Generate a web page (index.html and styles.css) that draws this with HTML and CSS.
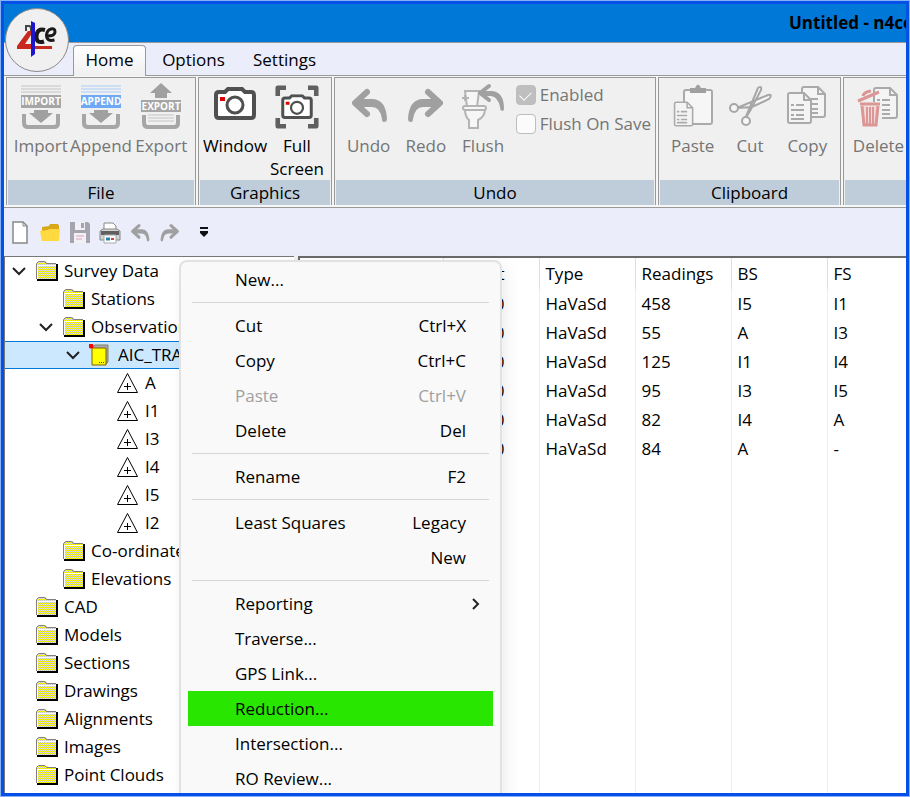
FILE: index.html
```html
<!DOCTYPE html>
<html lang="en">
<head>
<meta charset="utf-8">
<title>Untitled - n4ce</title>
<link rel="stylesheet" href="styles.css">
</head>
<body>
<svg class="defs" aria-hidden="true">
  <defs>
    <pattern id="dither" width="2" height="2" patternUnits="userSpaceOnUse">
      <rect width="2" height="2" fill="#c6c6c6"/><rect width="1" height="1" fill="#ff0"/><rect x="1" y="1" width="1" height="1" fill="#ff0"/>
    </pattern>
    <pattern id="dither-alt" width="2" height="2" patternUnits="userSpaceOnUse">
      <rect width="2" height="2" fill="#ff0"/><rect width="1" height="1" fill="#c6c6c6"/><rect x="1" y="1" width="1" height="1" fill="#c6c6c6"/>
    </pattern>
    <symbol id="folder-frame" viewBox="0 0 24 22">
      <path d="M1.500 19V3.500L3.500 1.500h6l2 2h9.500" fill="none" stroke="#808080"/>
      <path d="M2.500 19V5.500h19" fill="none" stroke="#fff"/>
      <path d="M2 20h20V4" fill="none" stroke="#000" stroke-width="2" shape-rendering="crispEdges"/>
    </symbol>
    <symbol id="folder" viewBox="0 0 24 22">
      <path d="M2 19V4L4 1h7l2 3h8v15z" fill="url(#dither)" shape-rendering="crispEdges"/>
      <use href="#folder-frame" width="24" height="22"/>
    </symbol>
    <symbol id="folder-alt" viewBox="0 0 24 22">
      <path d="M2 19V4L4 1h7l2 3h8v15z" fill="url(#dither-alt)" shape-rendering="crispEdges"/>
      <use href="#folder-frame" width="24" height="22"/>
    </symbol>
    <symbol id="station" viewBox="0 0 24 22">
      <path d="M11.500 1.500L1.500 20.500h20zM8 14.500h7M11.500 11v7" fill="none" stroke="#000"/>
    </symbol>
    <symbol id="chevron" viewBox="0 0 14 14"><path d="M1 4l6 6 6-6" fill="none" stroke="#222" stroke-width="2"/></symbol>
    <symbol id="undo" viewBox="0 0 38 38">
      <path d="M17 5L5 16l12 11" fill="none" stroke="#a0a0a0" stroke-width="6" stroke-linejoin="round" stroke-linecap="round"/>
      <path d="M7 12h16q13 1 14 20 0 3-3 3-2 0-2-3-2-12-10-12H7z" fill="#a0a0a0"/>
    </symbol>
    <symbol id="sheet" viewBox="0 0 28 34">
      <path d="M2 4q0-2 2-2h14l7 7v21q0 2-2 2H4q-2 0-2-2z" fill="#f4f4f4" stroke="#aaa" stroke-width="2"/>
      <path d="M18 2v7h7" fill="none" stroke="#aaa" stroke-width="2"/>
      <path d="M5 14h3m2 0h8M5 19h13M5 24h3m2 0h8M5 28h13" stroke="#aaa" stroke-width="2"/>
    </symbol>
    <symbol id="camera" viewBox="0 0 44 34">
      <path d="M3 8q0-3 3-3h6l3-3h14l3 3h6q3 0 3 3v20q0 3-3 3H6q-3 0-3-3z" fill="#fff" stroke="#505050" stroke-width="4"/>
      <circle cx="22" cy="18" r="8" fill="#fff" stroke="#505050" stroke-width="3"/><rect x="7" y="10" width="5" height="4" fill="#d00"/>
    </symbol>
  </defs>
</svg>
<div class="window">
  <header class="titlebar"><h1>Untitled - n4ce</h1></header>
  <button class="app-button" aria-label="Application menu">
    <svg viewBox="0 0 62 62" width="62" height="62">
      <path d="M25 22h-3L11 37v3h35v-3H29l-4-1z" fill="#c8281e"/><path d="M19 35l6-9v9z" fill="#f0f0f0"/>
      <path d="M20 22v-5h3q2 0 2 3v2" fill="none" stroke="#444" stroke-width="2"/>
      <path d="M39 21q-8-2-8.500 6t7.500 5.500" fill="none" stroke="#1a1a1a" stroke-width="4"/>
      <path d="M41 27q8 0 8-4 0-4-4-3-4 1-4.500 6 0 7 8 5" fill="none" stroke="#1a1a1a" stroke-width="3"/>
      <path d="M25 12l4 2v31l-4 3z" fill="#1c16d0"/>
    </svg>
  </button>
  <nav class="tabs">
    <button class="tab active">Home</button><button class="tab">Options</button><button class="tab">Settings</button>
  </nav>
  <section class="ribbon">
    <div class="group g-file">
      <div class="tools">
        <button class="tool" disabled><svg viewBox="0 0 44 48"><path d="M2 3h40M2 6h40M2 9h40" stroke="#c4c4c4"/><path d="M2 12h40v13H2z" fill="#a6a6a6"/><text x="22" y="22" class="badge-text">IMPORT</text><path d="M15 27h14v3h5L22 40 10 30h5z" fill="#a0a0a0"/><path d="M5 31v9q0 4 4 4h26q4 0 4-4v-9" fill="none" stroke="#a6a6a6" stroke-width="4"/></svg>Import</button>
        <button class="tool" disabled><svg viewBox="0 0 44 48"><path d="M2 3h40M2 6h40M2 9h40" stroke="#a9cdf8"/><path d="M2 12h40v13H2z" fill="#6fa8f5"/><text x="22" y="22" class="badge-text">APPEND</text><path d="M15 27h14v3h5L22 40 10 30h5z" fill="#a0a0a0"/><path d="M5 31v9q0 4 4 4h26q4 0 4-4v-9" fill="none" stroke="#a6a6a6" stroke-width="4"/></svg>Append</button>
        <button class="tool" disabled><svg viewBox="0 0 44 48"><path d="M22 0l11 10h-5v5H16v-5h-5z" fill="#a0a0a0"/><path d="M2 17h40v12H2z" fill="#a6a6a6"/><text x="22" y="27" class="badge-text">EXPORT</text><path d="M9 32h26M9 35h26M9 38h26" stroke="#c4c4c4"/><path d="M5 32v8q0 4 4 4h26q4 0 4-4v-8" fill="none" stroke="#a6a6a6" stroke-width="4"/></svg>Export</button>
      </div>
      <h2>File</h2>
    </div>
    <div class="group g-graphics">
      <div class="tools">
        <button class="tool"><svg viewBox="0 0 44 48"><use href="#camera" x="0" y="4" width="44" height="34"/></svg>Window</button>
        <button class="tool"><svg viewBox="0 0 48 48"><path d="M3 12V3h9M36 3h9v9M3 36v9h9M36 45h9v-9" fill="none" stroke="#606060" stroke-width="5" stroke-linejoin="round"/><use href="#camera" x="6" y="10" width="36" height="28"/></svg>Full<br>Screen</button>
      </div>
      <h2>Graphics</h2>
    </div>
    <div class="group g-undo">
      <div class="tools">
        <button class="tool" disabled><svg viewBox="0 0 44 48"><use href="#undo" x="3" y="4" width="38" height="38"/></svg>Undo</button>
        <button class="tool" disabled><svg viewBox="0 0 44 48"><use href="#undo" x="3" y="4" width="38" height="38" transform="matrix(-1 0 0 1 44 0)"/></svg>Redo</button>
        <button class="tool" disabled><svg viewBox="0 0 44 48"><g fill="#f6f6f6" stroke="#b4b4b4" stroke-width="2"><path d="M4 8h14l-2 16H6zM4 26h20q0 8-7 11v8H8v-8q-4-3-4-11z"/><rect x="2" y="23" width="23" height="4" rx="2"/><path d="M1 15h7M4 12v6"/></g><path d="M28 3l-9 7 9 7" fill="none" stroke="#a0a0a0" stroke-width="4" stroke-linejoin="round" stroke-linecap="round"/><path d="M20 8h11q12 1 12 18 0 2-2 2-2-1-2-4-2-10-9-11H20z" fill="#a0a0a0"/></svg>Flush</button>
        <div class="checks">
          <label><input type="checkbox" checked disabled>Enabled</label>
          <label><input type="checkbox" disabled>Flush On Save</label>
        </div>
      </div>
      <h2>Undo</h2>
    </div>
    <div class="group g-clip">
      <div class="tools">
        <button class="tool" disabled><svg viewBox="0 0 44 48"><rect x="13" y="7" width="28" height="34" rx="2" fill="#f6f6f6" stroke="#aaa" stroke-width="2"/><path d="M19 10V5h5q3-7 6 0h5v5z" fill="#a0a0a0"/><use href="#sheet" x="2" y="17" width="22" height="28"/></svg>Paste</button>
        <button class="tool" disabled><svg viewBox="0 0 44 48"><g fill="#f6f6f6" stroke="#a6a6a6" stroke-width="2"><path d="M17 36L30 5q4-3 3 2L22 28zM9 25l31-13q5-1 1 4L24 24z"/><circle cx="6" cy="25" r="4"/><circle cx="18" cy="38" r="4"/></g></svg>Cut</button>
        <button class="tool" disabled><svg viewBox="0 0 44 48"><use href="#sheet" x="15" y="2" width="28" height="34"/><use href="#sheet" x="1" y="8" width="28" height="34"/></svg>Copy</button>
      </div>
      <h2>Clipboard</h2>
    </div>
    <div class="group g-edit">
      <div class="tools">
        <button class="tool" disabled><svg viewBox="0 0 44 48"><use href="#sheet" x="15" y="3" width="28" height="34"/><path d="M2 19h23v26H2z" fill="#f0f0f0"/><path d="M1 18L22 9M6 13q1-4 8-5" fill="none" stroke="#dc9696" stroke-width="3"/><path d="M3 21h20M5 23l2 19h12l2-19" fill="#f3dada" stroke="#dc9696" stroke-width="3"/><path d="M10 24v17M13 24v17M16 24v17" stroke="#dc9696" stroke-width="2"/></svg>Delete</button>
      </div>
      <h2></h2>
    </div>
  </section>
  <div class="quick">
    <button aria-label="New"><svg viewBox="0 0 24 24"><path d="M5 2h10l4 4v17H5z" fill="#fff" stroke="#888" stroke-width="1.500"/><path d="M15 2v4h4" fill="none" stroke="#888"/></svg></button>
    <button aria-label="Open"><svg viewBox="0 0 24 24"><path d="M4 20V7l7-1 1-2h8l1 2v14z" fill="#d8a818"/><path d="M2 11l8-1 1-1h11l-1 12H4z" fill="#ffd940"/></svg></button>
    <button aria-label="Save" disabled><svg viewBox="0 0 24 24"><path d="M2 2h18l2 2v19H2z" fill="#a4a4b0"/><path d="M7 2h10v8H7zM6 13h12v10H6z" fill="#f2f0f5"/><path d="M13 3h3v5h-3z" fill="#a4a4b0"/><path d="M8 16h8M8 19h6" stroke="#daa3b5"/></svg></button>
    <button aria-label="Print"><svg viewBox="0 0 24 24"><path d="M6 10V3h9l3 3v4" fill="#fff" stroke="#888"/><path d="M2 11l3-2h14l3 2v9H2z" fill="#d4d4d4" stroke="#888"/><path d="M3 11h18v4H3z" fill="#606060"/><path d="M6 15h12v8H6z" fill="#fff" stroke="#aaa"/><path d="M8 19h4" stroke="#28a" stroke-width="3"/><path d="M13 19h3" stroke="#c44" stroke-width="2"/></svg></button>
    <button aria-label="Undo" disabled><svg viewBox="0 0 24 24"><use href="#undo" x="2" y="3" width="20" height="20"/></svg></button>
    <button aria-label="Redo" disabled><svg viewBox="0 0 24 24"><use href="#undo" x="2" y="3" width="20" height="20" transform="matrix(-1 0 0 1 24 0)"/></svg></button>
    <button class="more" aria-label="Customise toolbar"><svg viewBox="0 0 24 24"><path d="M8 7h8v2H8zM8 11h8v2l-4 4-4-4z" fill="#111"/></svg></button>
  </div>
  <main class="workspace">
    <ul class="tree">
      <li class="l0"><svg class="chev"><use href="#chevron"/></svg><svg class="ico"><use href="#folder"/></svg>Survey Data</li>
      <li class="l1"><svg class="ico"><use href="#folder"/></svg>Stations</li>
      <li class="l1"><svg class="chev"><use href="#chevron"/></svg><svg class="ico"><use href="#folder"/></svg>Observations</li>
      <li class="l2 selected"><svg class="chev"><use href="#chevron"/></svg><svg class="ico" viewBox="0 0 24 22"><path d="M3 4l3-3h13v17l-3 3z" fill="#aaa" stroke="#808060"/><path d="M3 4h14v17H3z" fill="#ff0" stroke="#806000"/><circle cx="2" cy="2" r="2.500" fill="red"/><path d="M10 18.500h6" stroke="red" stroke-dasharray="1 1"/></svg>AIC_TRAV</li>
      <li class="l3"><svg class="ico"><use href="#station"/></svg>A</li>
      <li class="l3"><svg class="ico"><use href="#station"/></svg>I1</li>
      <li class="l3"><svg class="ico"><use href="#station"/></svg>I3</li>
      <li class="l3"><svg class="ico"><use href="#station"/></svg>I4</li>
      <li class="l3"><svg class="ico"><use href="#station"/></svg>I5</li>
      <li class="l3"><svg class="ico"><use href="#station"/></svg>I2</li>
      <li class="l1"><svg class="ico"><use href="#folder"/></svg>Co-ordinates</li>
      <li class="l1"><svg class="ico"><use href="#folder"/></svg>Elevations</li>
      <li class="l0"><svg class="ico"><use href="#folder"/></svg>CAD</li>
      <li class="l0"><svg class="ico"><use href="#folder"/></svg>Models</li>
      <li class="l0"><svg class="ico"><use href="#folder"/></svg>Sections</li>
      <li class="l0"><svg class="ico"><use href="#folder"/></svg>Drawings</li>
      <li class="l0"><svg class="ico"><use href="#folder"/></svg>Alignments</li>
      <li class="l0"><svg class="ico"><use href="#folder"/></svg>Images</li>
      <li class="l0"><svg class="ico"><use href="#folder-alt"/></svg>Point Clouds</li>
    </ul>
    <div class="list">
      <table>
        <colgroup><col class="c-name"><col class="c"><col class="c"><col class="c"><col class="c"><col></colgroup>
        <thead><tr><th></th><th class="r">t</th><th>Type</th><th>Readings</th><th>BS</th><th>FS</th></tr></thead>
        <tbody>
          <tr><td></td><td class="r">0</td><td>HaVaSd</td><td>458</td><td>I5</td><td>I1</td></tr>
          <tr><td></td><td class="r">0</td><td>HaVaSd</td><td>55</td><td>A</td><td>I3</td></tr>
          <tr><td></td><td class="r">0</td><td>HaVaSd</td><td>125</td><td>I1</td><td>I4</td></tr>
          <tr><td></td><td class="r">0</td><td>HaVaSd</td><td>95</td><td>I3</td><td>I5</td></tr>
          <tr><td></td><td class="r">0</td><td>HaVaSd</td><td>82</td><td>I4</td><td>A</td></tr>
          <tr><td></td><td class="r">0</td><td>HaVaSd</td><td>84</td><td>A</td><td>-</td></tr>
          <tr class="filler"><td></td><td></td><td></td><td></td><td></td><td></td></tr>
        </tbody>
      </table>
    </div>
    <div class="menu" role="menu">
      <button role="menuitem">New...</button>
      <hr>
      <button role="menuitem">Cut<span>Ctrl+X</span></button>
      <button role="menuitem">Copy<span>Ctrl+C</span></button>
      <button role="menuitem" disabled>Paste<span>Ctrl+V</span></button>
      <button role="menuitem">Delete<span>Del</span></button>
      <hr>
      <button role="menuitem">Rename<span>F2</span></button>
      <hr>
      <button role="menuitem">Least Squares<span>Legacy</span></button>
      <button role="menuitem"><span>New</span></button>
      <hr>
      <button role="menuitem" class="sub">Reporting<svg viewBox="0 0 14 14"><path d="M4 2l5 5-5 5" fill="none" stroke="#222" stroke-width="2"/></svg></button>
      <button role="menuitem">Traverse...</button>
      <button role="menuitem">GPS Link...</button>
      <button role="menuitem" class="hot">Reduction...</button>
      <button role="menuitem">Intersection...</button>
      <button role="menuitem">RO Review...</button>
    </div>
  </main>
</div>
</body>
</html>
```

FILE: styles.css
```css
* { box-sizing: border-box; }
html, body { height: 100%; margin: 0; }
body { font: 17px/22px "Open Sans", "Noto Sans", sans-serif; color: #000; background: #84b0f6; padding: 1px; }
button { font: inherit; color: inherit; background: none; border: 0; padding: 0; margin: 0; }
h1, h2, ul { margin: 0; padding: 0; font: inherit; }
svg { display: block; flex: none; }
.defs { position: absolute; width: 0; height: 0; }
.window { position: relative; height: 100%; border: 3px solid #0550e6; overflow: hidden; display: flex; flex-direction: column; background: #ebedfb; }

.titlebar { flex: none; height: 39px; background: #0078d7; border-bottom: 1px solid #999; display: flex; justify-content: flex-end; align-items: center; }
.titlebar h1 { font-weight: 700; white-space: nowrap; width: 117px; }
.app-button { position: absolute; left: 1px; top: 4px; width: 64px; height: 64px; border: 1px solid #8a8a8a; border-radius: 50%; background: #f0f0f0; z-index: 2; }
.tabs { flex: none; height: 33px; padding: 2px 0 0 69px; display: flex; border-bottom: 1px solid #999; }
.tab { width: 89px; height: 31px; padding-bottom: 2px; }
.tab + .tab { width: 91px; padding-left: 4px; }
.tab.active { width: 73px; background: linear-gradient(#fff, #f0f0f0); border: 1px solid #999; border-bottom: 0; border-radius: 4px 4px 0 0; }

.ribbon { flex: none; height: 132px; padding: 1px 0 2px 2px; display: flex; gap: 2px; background: #f6f6f6; border-bottom: 1px solid #999; }
.group { flex: none; display: flex; flex-direction: column; border: 1px solid #999; border-bottom: 0; background: #f0f0f0; padding: 1px 1px 0; }
.g-file { width: 190px; }
.g-graphics { width: 134px; }
.g-undo { width: 322px; }
.g-clip { width: 183px; }
.g-edit { flex: 1 0 68px; border-right: 0; padding-right: 0; }
.group h2 { flex: none; height: 25px; line-height: 25px; text-align: center; background: #bfcddb; }
.tools { flex: 1; min-height: 0; display: flex; padding: 1px 3px 0; justify-content: flex-start; }
.tool { display: flex; flex-direction: column; align-items: center; justify-content: flex-start; padding-top: 3px; width: 61px; line-height: 23px; white-space: nowrap; }
.tool svg { width: 44px; height: 48px; margin-bottom: 3px; }
.tool:disabled, .checks { color: #757575; }
.g-graphics .tool { width: 64px; }
.g-graphics .tool svg, .g-edit .tool svg { overflow: visible; }
.g-undo .tool, .g-clip .tool { width: 58px; }
.badge-text { font: 700 10px "Open Sans", sans-serif; fill: #fff; text-anchor: middle; }
.checks { padding: 0 0 0 4px; }
.checks label { display: flex; align-items: center; gap: 4px; height: 29px; white-space: nowrap; }
.checks input { appearance: none; width: 20px; height: 20px; margin: 0; border: 1px solid #bdbdbd; border-radius: 4px; background: #fbfbfb; display: grid; place-content: center; }
.checks input:checked { background: #bfbfbf; }
.checks input:checked::before { content: ""; width: 10px; height: 6px; border: solid #fff; border-width: 0 0 1px 1px; transform: rotate(-45deg); }
.g-undo .tools, .g-clip .tools { padding-left: 4px; }

.quick { flex: none; height: 48px; display: flex; align-items: center; gap: 6px; padding-left: 4px; }
.quick svg { width: 24px; height: 24px; }
.quick .more { margin-left: 4px; }

.workspace { flex: 1; min-height: 0; position: relative; display: flex; gap: 4px; background: #f0f0f0; }
.tree { flex: none; width: 290px; list-style: none; background: #fff; border-top: 1px solid #777; border-left: 1px solid #777; overflow: hidden; }
.tree li { height: 28px; display: flex; align-items: center; gap: 5px; white-space: nowrap; }
.tree .l0 { padding-left: 30px; }
.tree .l1 { padding-left: 57px; }
.tree .l2 { padding-left: 84px; }
.tree .l3 { padding-left: 111px; }
.tree .selected { background: #cce8ff; border: solid #0078d7; border-width: 1px 0; }
.ico { width: 24px; height: 22px; }
.chev { width: 14px; height: 14px; margin-left: -23px; margin-right: 4px; }
.list { flex: 1; min-width: 0; background: #fff; border-top: 2px solid #6a6a6a; border-left: 2px solid #6a6a6a; overflow: hidden; }
.list table { width: 100%; height: 100%; border-collapse: collapse; table-layout: fixed; }
.c-name { width: 143px; }
.c { width: 96px; }
.list th, .list td { height: 29px; padding: 0 6px; text-align: left; font-weight: 400; border-right: 1px solid #e6f0f6; white-space: nowrap; }
.list th { height: 31px; border-color: #dedede; }
.list th:last-child, .list td:last-child { border-right: 0; }
.list .r { text-align: right; padding-right: 34px; }
.list .filler td { height: auto; }

.menu { position: absolute; left: 175px; top: 4px; width: 323px; height: 620px; padding: 0 7px; border: 2px solid #e2e2e2; border-radius: 8px; background: #f9f9f9; box-shadow: 4px 6px 16px rgba(0, 0, 0, .08); }
.menu button { display: flex; align-items: center; width: 100%; height: 35px; padding: 0 27px 0 47px; white-space: nowrap; }
.menu button:disabled { color: #a0a0a0; }
.menu span, .menu svg { margin-left: auto; }
.menu svg { width: 14px; height: 14px; }
.menu .sub { padding-right: 10px; }
.menu .hot { background: #28e600; }
.menu hr { border: 0; height: 1px; background: #d6d6d6; margin: 5px 4px; }
```
